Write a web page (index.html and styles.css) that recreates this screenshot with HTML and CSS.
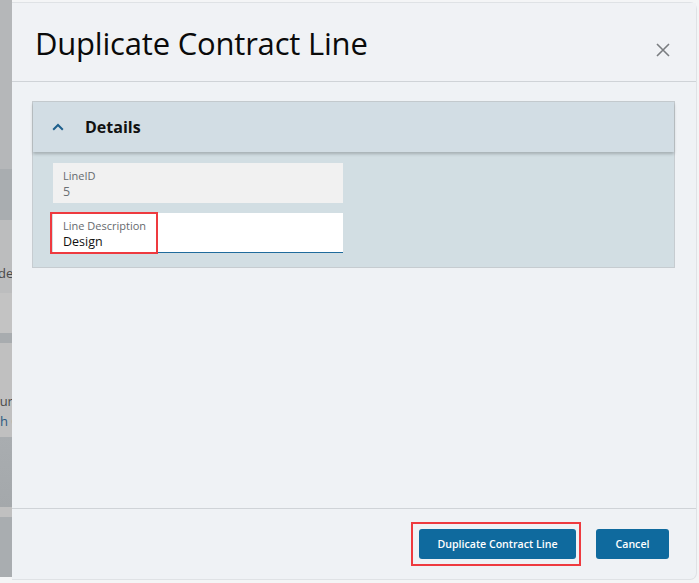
FILE: index.html
```html
<!DOCTYPE html>
<html>
<head>
<meta charset="utf-8">
<link rel="stylesheet" href="styles.css">
</head>
<body>
<div class="page">
  <div class="backdrop">
    <div class="band b1"></div>
    <div class="band b2"></div>
    <div class="band b3"><span class="peek peek-de">de</span></div>
    <div class="band b4"></div>
    <div class="band b5"></div>
    <div class="band b6"><span class="peek peek-tur">tur</span><span class="peek peek-h"><span class="link">h</span> C</span></div>
    <div class="band b7"></div>
    <div class="band b8"></div>
    <div class="band b9"></div>
    <div class="band b10"></div>
  </div>
  <div class="dialog">
    <div class="dialog-header">
      <h1 class="title">Duplicate Contract Line</h1>
      <button class="close" aria-label="Close">
        <svg width="14" height="14" viewBox="0 0 14 14"><path d="M1 1L13 13M13 1L1 13" stroke="#7a7d80" stroke-width="1.6" fill="none"/></svg>
      </button>
    </div>
    <div class="dialog-body">
      <div class="section">
        <div class="section-header">
          <svg class="chev" width="12" height="8" viewBox="0 0 12 8"><path d="M1.2 6.8L6 2L10.8 6.8" stroke="#1d5f8c" stroke-width="2" fill="none"/></svg>
          <span class="section-title">Details</span>
        </div>
        <div class="section-content">
          <div class="field readonly">
            <div class="label">LineID</div>
            <div class="value">5</div>
          </div>
          <div class="field editable">
            <div class="label">Line Description</div>
            <div class="value">Design</div>
            <div class="highlight hl-field"></div>
          </div>
        </div>
      </div>
    </div>
    <div class="dialog-footer">
      <div class="btn-wrap">
        <button class="btn">Duplicate Contract Line</button>
        <div class="highlight hl-btn"></div>
      </div>
      <button class="btn btn-cancel">Cancel</button>
    </div>
  </div>
  <div class="edge"></div>
</div>
</body>
</html>
```
FILE: styles.css
```css
* { box-sizing: border-box; }
html, body { margin: 0; padding: 0; }
body {
  width: 699px;
  height: 583px;
  overflow: hidden;
  background: #f4f5f6;
  font-family: "Open Sans", "Noto Sans", sans-serif;
}
.page {
  display: flex;
  height: 583px;
}
.backdrop {
  width: 12px;
  flex: none;
  display: flex;
  flex-direction: column;
  overflow: hidden;
}
.band { flex: none; position: relative; overflow: hidden; }
.b1 { height: 169px; background: #b5b7b9; }
.b2 { height: 51px; background: #a9adb0; }
.b3 { height: 73px; background: #bcbdbe; }
.b4 { height: 40px; background: #c3c3c3; }
.b5 { height: 10px; background: #a8acaf; }
.b6 { height: 94px; background: #c0c0c0; }
.b7 { height: 70px; background: linear-gradient(#a9adb0, #a4a8ab); }
.b8 { height: 10px; background: #c0c0c0; }
.b9 { height: 60px; background: #a9adb0; }
.b10 { height: 6px; background: #f4f5f6; }
.peek {
  position: absolute;
  left: 0;
  font-size: 13px;
  color: #4a4a4a;
  white-space: nowrap;
  line-height: 16px;
}
.peek-de { top: 45px; left: -2px; }
.peek-tur { top: 50px; left: -5px; }
.peek-h { top: 70px; left: 0; color: #8a8a8a; }
.link { color: #2d5a80; }

.dialog {
  width: 685px;
  flex: none;
  margin-top: 2px;
  height: 578px;
  background: #eff2f5;
  border: 1px solid #dfe2e5;
  border-left: none;
  border-radius: 0 7px 7px 0;
  display: flex;
  flex-direction: column;
  position: relative;
}
.edge { flex: 1; background: #f4f5f6; }

.dialog-header {
  height: 79px;
  flex: none;
  border-bottom: 1px solid #cfd3d7;
  display: flex;
  align-items: flex-start;
  justify-content: space-between;
  padding: 0 26px 0 23px;
  background: #f0f2f5;
}
.title {
  margin: 20px 0 0 0;
  font-weight: 400;
  font-size: 31px;
  line-height: 40px;
  color: #0a0a0a;
  letter-spacing: -0.2px;
}
.close {
  margin-top: 40px;
  padding: 0;
  border: none;
  background: none;
  width: 14px;
  height: 14px;
  display: block;
}
.close svg { display: block; }

.dialog-body {
  flex: 1;
  padding: 19px 21px 0 20px;
}
.section {
  border: 1px solid #c6ccd0;
  background: #d2dee3;
}
.section-header {
  height: 50px;
  display: flex;
  align-items: center;
  padding-left: 19px;
  background: #d2dde4;
  box-shadow: 0 2px 3px rgba(0, 0, 0, 0.22);
  position: relative;
}
.chev { display: block; }
.section-title {
  margin-left: 21px;
  font-weight: 700;
  font-size: 16px;
  color: #111;
}
.section-content {
  padding: 11px 0 14px 20px;
  display: flex;
  flex-direction: column;
  gap: 10px;
}
.field {
  width: 290px;
  height: 40px;
  padding: 5px 10px 0;
  position: relative;
}
.readonly { background: #f1f1f1; }
.editable { background: #fff; border-bottom: 1px solid #1f6b9c; }
.label {
  font-size: 11px;
  line-height: 15px;
  color: #666a6e;
}
.value {
  font-size: 12.5px;
  line-height: 17px;
}
.readonly .value { color: #6b6f73; }
.editable .value { color: #111; }

.highlight {
  position: absolute;
  border: 2px solid #ee3a3f;
  pointer-events: none;
}
.hl-field { left: -3px; top: -1px; width: 108px; height: 42px; }

.dialog-footer {
  height: 71px;
  flex: none;
  border-top: 1px solid #cfd3d7;
  display: flex;
  justify-content: flex-end;
  align-items: flex-start;
  padding: 20px 27px 0 0;
  gap: 20px;
}
.btn-wrap { position: relative; }
.btn {
  display: block;
  height: 30px;
  width: 157px;
  border: none;
  border-radius: 3px;
  background: #0f6a9e;
  color: #fff;
  font-family: "Open Sans", "Noto Sans", sans-serif;
  font-size: 10.6px;
  font-weight: 600;
  padding: 0;
}
.btn-cancel { width: 73px; }
.hl-btn { left: -8px; top: -7px; width: 170px; height: 44px; }
```
